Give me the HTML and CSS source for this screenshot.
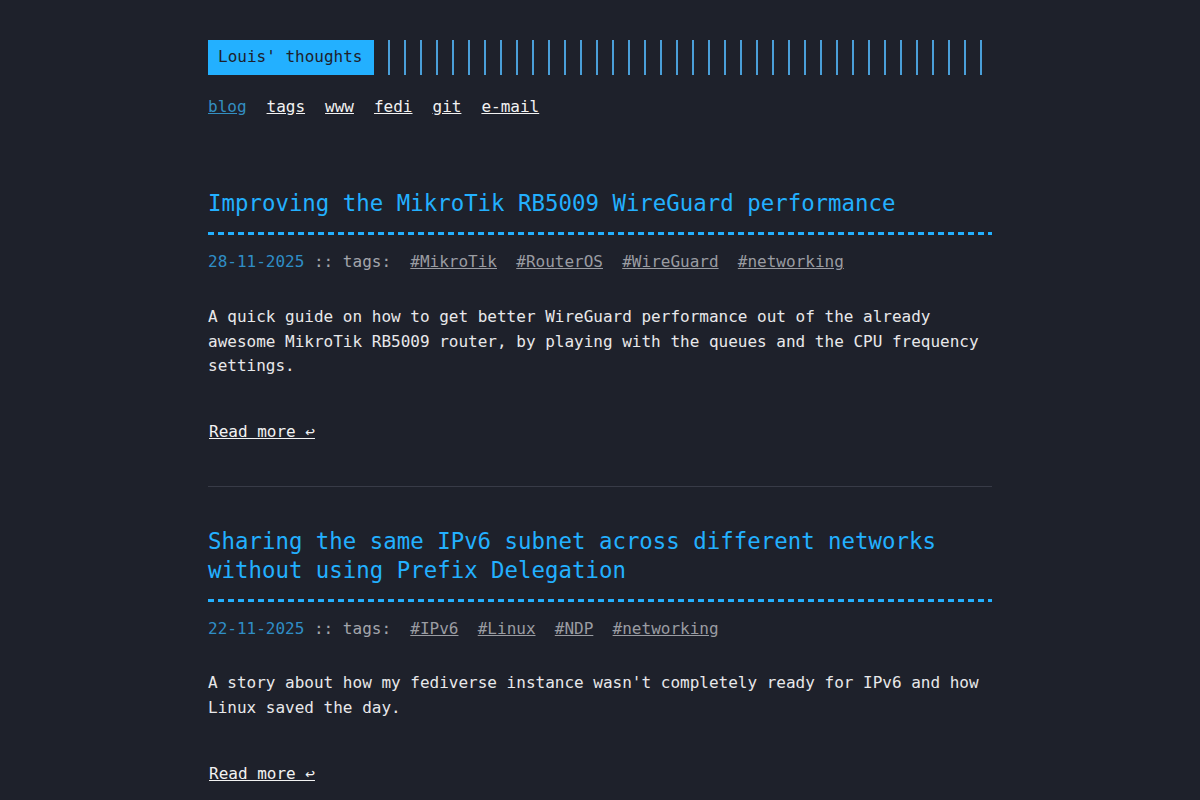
FILE: index.html
```html
<!DOCTYPE html>
<html lang="en">
<head>
  <meta charset="UTF-8" />
  <meta name="viewport" content="width=device-width, initial-scale=1" />
  <title>Louis' thoughts</title>
  <link rel="stylesheet" href="styles.css">
</head>
<body>
  <div class="container">
    <header class="header">
      <div class="header-logo">
        <a class="logo" href="#">Louis' thoughts</a>
      </div>
      <nav class="menu">
        <ul class="menu-inner">
          <li><a class="active" href="#">blog</a></li>
          <li><a href="#">tags</a></li>
          <li><a href="#">www</a></li>
          <li><a href="#">fedi</a></li>
          <li><a href="#">git</a></li>
          <li><a href="#">e-mail</a></li>
        </ul>
      </nav>
    </header>

    <main class="posts">
      <article class="post">
        <h2 class="post-title"><a href="#">Improving the MikroTik RB5009 WireGuard performance</a></h2>
        <div class="post-meta">
          <span class="post-date">28-11-2025</span> <span class="post-tags">:: tags:&nbsp; <a href="#">#MikroTik</a>&nbsp; <a href="#">#RouterOS</a>&nbsp; <a href="#">#WireGuard</a>&nbsp; <a href="#">#networking</a></span>
        </div>
        <div class="post-content">
          <p>A quick guide on how to get better WireGuard performance out of the already awesome MikroTik RB5009 router, by playing with the queues and the CPU frequency settings.</p>
        </div>
        <a class="read-more" href="#">Read more ↩</a>
      </article>

      <article class="post">
        <h2 class="post-title"><a href="#">Sharing the same IPv6 subnet across different networks without using Prefix Delegation</a></h2>
        <div class="post-meta">
          <span class="post-date">22-11-2025</span> <span class="post-tags">:: tags:&nbsp; <a href="#">#IPv6</a>&nbsp; <a href="#">#Linux</a>&nbsp; <a href="#">#NDP</a>&nbsp; <a href="#">#networking</a></span>
        </div>
        <div class="post-content">
          <p>A story about how my fediverse instance wasn't completely ready for IPv6 and how Linux saved the day.</p>
        </div>
        <a class="read-more" href="#">Read more ↩</a>
      </article>
    </main>
  </div>
</body>
</html>
```

FILE: styles.css
```css
body {
  margin: 0;
  background-color: #1e212b;
  color: #e8e8ea;
  font-family: "DejaVu Sans Mono", "Liberation Mono", monospace;
  font-size: 16px;
  line-height: 1.54;
}
a {
  color: inherit;
}
.container {
  max-width: 784px;
  margin: 0 auto;
  padding: 40px;
}

/* header */
.header-logo {
  display: flex;
}
.header-logo::after {
  content: "";
  flex: 1;
  margin-left: 14px;
  background: repeating-linear-gradient(90deg, #4a9fd9 0, #4a9fd9 2px, transparent 2px, transparent 16px);
}
.logo {
  display: flex;
  align-items: center;
  background-color: #23b0ff;
  color: #1e212b;
  padding: 5px 11px 5px 10px;
  text-decoration: none;
}
.menu {
  margin: 20px 0 50px;
}
.menu-inner {
  display: flex;
  list-style: none;
  margin: 0;
  padding: 0;
}
.menu-inner li {
  margin-right: 20px;
}
.menu-inner a {
  color: #f2f2f2;
}
.menu-inner a.active {
  color: #338fc2;
}

/* posts */
.post {
  margin: 20px 0;
  padding: 20px 0 41px;
}
.post:not(:last-of-type) {
  border-bottom: 1px solid #383b47;
}
.post-title {
  margin: 0 0 15px;
  padding-bottom: 17px;
  font-size: 22.4px;
  font-weight: normal;
  line-height: 1.3;
  color: #23b0ff;
  background: repeating-linear-gradient(90deg, #23b0ff 0, #23b0ff 6px, transparent 6px, transparent 10px) left bottom / 100% 3px no-repeat;
}
.post-title a {
  text-decoration: none;
}
.post-meta {
  color: #a3a5ab;
}
.post-date {
  color: #2f8ec6;
}
.post-tags a {
  color: #9a9ca2;
}
.post-content {
  margin-top: 30px;
}
.post-content p {
  margin: 0;
}
.read-more {
  display: inline-block;
  margin: 41px 0 0 1px;
  color: #f2f2f2;
}
```
